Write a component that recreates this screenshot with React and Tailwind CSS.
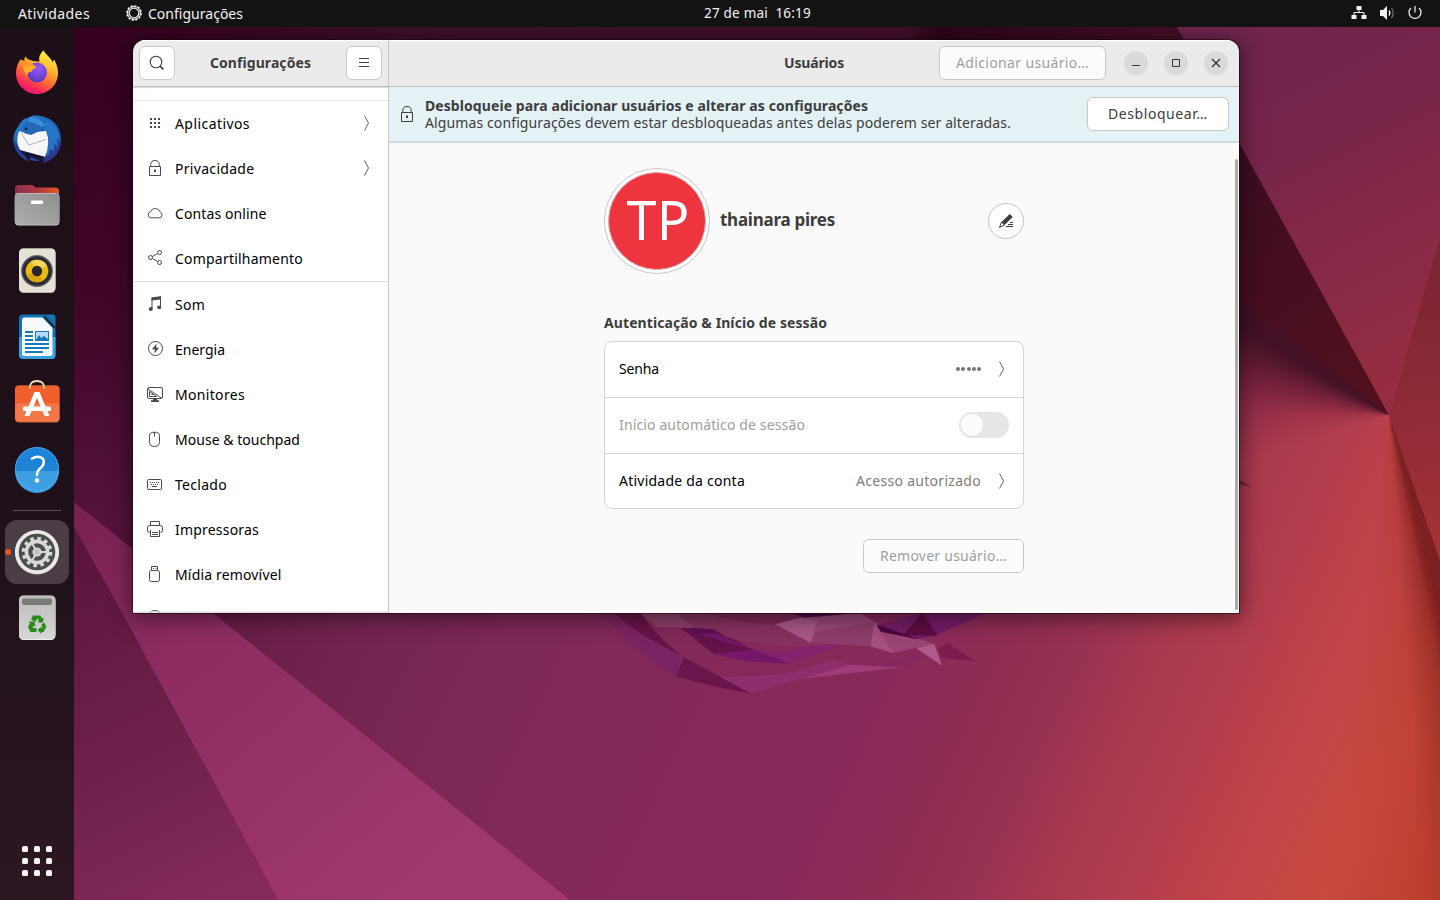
import { useLayoutEffect, useRef } from 'react';

/* Text that is tracked so that it fills exactly `w` pixels. */
function Label({ w, className = '', children }) {
  const ref = useRef(null);
  useLayoutEffect(() => {
    const el = ref.current;
    el.style.letterSpacing = '0px';
    const range = document.createRange();
    range.selectNodeContents(el);
    const natural = range.getBoundingClientRect().width;
    el.style.letterSpacing = `${(w - natural) / children.length}px`;
  }, [w, children]);
  return (
    <span className={`block shrink-0 whitespace-pre ${className}`} style={{ width: w }}>
      <span ref={ref}>{children}</span>
    </span>
  );
}

/* ---------- wallpaper ---------- */
function Wallpaper() {
  return (
    <div className="absolute inset-0 overflow-hidden">
      <div className="absolute inset-x-0 top-[27px] bottom-0 bg-[linear-gradient(115deg,#3c0022_0%,#4b0e33_12%,#5d183f_23%,#72244e_34%,#7e2856_43%,#84295a_56%,#872959_64%,#922d53_71%,#9a3351_75%,#ac3a4e_80%,#b73f4c_84.5%,#c24547_89%,#c9493e_94%,#c44430_100%)]" />
      <svg className="absolute inset-0" width="1440" height="900" viewBox="0 0 1440 900">
        <defs>
          <linearGradient id="purple" gradientUnits="userSpaceOnUse" x1="1200" y1="60" x2="1370" y2="400">
            <stop offset="0" stopColor="#70254d" />
            <stop offset=".35" stopColor="#7a254a" />
            <stop offset="1" stopColor="#962d42" />
          </linearGradient>
          <linearGradient id="top" gradientUnits="userSpaceOnUse" x1="74" y1="0" x2="1180" y2="0">
            <stop offset="0" stopColor="#35001f" />
            <stop offset=".35" stopColor="#40102b" />
            <stop offset=".75" stopColor="#420f2b" />
            <stop offset=".78" stopColor="#2e0519" />
            <stop offset="1" stopColor="#440e26" />
          </linearGradient>
          <linearGradient id="left" gradientUnits="userSpaceOnUse" x1="74" y1="27" x2="133" y2="613">
            <stop offset="0" stopColor="#340020" />
            <stop offset=".45" stopColor="#400627" />
            <stop offset=".8" stopColor="#521139" />
            <stop offset="1" stopColor="#5b183f" />
          </linearGradient>
          <linearGradient id="lower" gradientUnits="userSpaceOnUse" x1="80" y1="560" x2="240" y2="880">
            <stop offset="0" stopColor="#5b163e" />
            <stop offset=".5" stopColor="#6c2049" />
            <stop offset="1" stopColor="#83295b" />
          </linearGradient>
          <linearGradient id="beam" gradientUnits="userSpaceOnUse" x1="60" y1="500" x2="400" y2="900">
            <stop offset="0" stopColor="#762050" />
            <stop offset=".35" stopColor="#8c2c61" />
            <stop offset="1" stopColor="#a0386f" />
          </linearGradient>
          <linearGradient id="shard" gradientUnits="userSpaceOnUse" x1="1239" y1="200" x2="1389" y2="415">
            <stop offset="0" stopColor="#3f0d22" />
            <stop offset="1" stopColor="#54101c" />
          </linearGradient>
          <linearGradient id="facet" gradientUnits="userSpaceOnUse" x1="1410" y1="300" x2="1440" y2="560">
            <stop offset="0" stopColor="#7f2535" />
            <stop offset="1" stopColor="#a53337" />
          </linearGradient>
        </defs>
        <polygon points="74,27 134,27 134,645 74,527" fill="url(#left)" />
        <polygon points="0,440 74,527 278,900 0,900" fill="url(#lower)" />
        <polygon points="74,502 213,613 570,900 278,900 115,600 74,527" fill="url(#beam)" />
        <rect x="74" y="27" width="1110" height="20" fill="url(#top)" />
        <polygon points="1177,27 1440,27 1440,235 1389,415 1239,142" fill="url(#purple)" />
      </svg>
      <div className="absolute inset-0 [clip-path:polygon(1200px_240px,1389px_415px,1440px_620px,1440px_900px,1200px_900px)] bg-[conic-gradient(from_0deg_at_1389px_415px,transparent_0deg,transparent_160deg,rgba(95,15,15,0.8)_165deg,rgba(115,25,20,0.5)_169deg,rgba(150,40,25,0.18)_176deg,transparent_188deg,transparent_252deg,rgba(110,25,60,0.25)_270deg,rgba(85,18,45,0.6)_285deg,rgba(60,15,35,0.92)_300deg,rgba(60,15,35,0.95)_310deg)]" />
      <svg className="absolute inset-0" width="1440" height="900" viewBox="0 0 1440 900">
        <polygon points="1230,126 1389,415 1230,293" fill="url(#shard)" />
        <polygon points="1230,280 1239,297 1389,415 1230,270" fill="url(#shard)" />
        <polygon points="1389,415 1440,235 1440,560" fill="url(#facet)" />
        <polygon points="1389,415 1440,560 1440,620" fill="#7d2023" />
        <polygon points="1239,480 1252,487 1239,484" fill="#6d1f3d" />
        <g transform="translate(560 600) scale(.33333)">
          <path d="M120 40 155 40 362 165 350 230Q230 160 120 40Z" fill="#7b2362" />
          <path d="M150 30 235 30Q280 100 362 165Q240 110 150 30Z" fill="#671448" />
          <path d="M372 172 575 281Q450 260 349 229Z" fill="#6a154c" />
          <path d="M480 231Q640 228 700 215L820 177 872 194Q700 240 575 281Z" fill="#8f2e6c" />
          <path d="M718 238 872 194 1028 202Z" fill="#9d3c77" />
          <path d="M940 197Q1030 180 1080 155L1110 165 1028 202Z" fill="#85285f" />
          <path d="M238 30H640V72Q520 88 440 87L290 80Z" fill="#85325f" />
          <path d="M238 38H345L405 83 290 80Z" fill="#8e4169" />
          <path d="M430 36H690L770 60 645 72Q540 75 430 36Z" fill="#7c2856" />
          <path d="M362 84 466 88 580 150 462 162Z" fill="#65124b" />
          <path d="M388 84 465 88 470 101 410 100Z" fill="#590f55" />
          <path d="M412 101 470 101 580 148 688 190Q560 190 462 162L580 149Z" fill="#74176a" />
          <path d="M575 147Q640 160 690 158L730 132 840 136 688 189Z" fill="#82246f" />
          <path d="M462 88 645 74 750 130 840 136Q620 145 500 112Z" fill="#87315f" />
          <path d="M683 37H870L770 63Z" fill="#520b47" />
          <path d="M720 54 900 40 943 66 750 129Z" fill="#9b4a7b" />
          <path d="M645 73 720 53 772 63 752 129Z" fill="#a85788" />
          <path d="M772 63 900 40 943 66 765 96Z" fill="#9b4878" />
          <path d="M765 96 943 66 932 139 752 129Z" fill="#8e3c6c" />
          <path d="M943 66 1122 132 998 159 932 139Z" fill="#9a4474" />
          <path d="M943 66 998 159 932 139Z" fill="#a54e80" />
          <path d="M952 74 1088 40H1280L1130 106 1070 118 962 94Z" fill="#741c65" />
          <path d="M1088 38 1132 107 1028 105Z" fill="#5c0c42" />
          <path d="M950 74 1028 100 1075 118 962 95Z" fill="#4c0941" />
          <path d="M1068 144 1123 132 1146 197Z" fill="#ae5a8a" />
          <path d="M1134 146 1163 130 1247 184 1146 173Z" fill="#7b1b4e" />
        </g>
      </svg>
    </div>
  );
}

/* ---------- dock icons, drawn on a 64 × 64 grid ---------- */
const Firefox = () => (
  <>
    <defs>
      <linearGradient id="ffBody" x1=".8" y1="0" x2=".3" y2="1">
        <stop offset="0" stopColor="#fff04a" />
        <stop offset=".35" stopColor="#ffb52c" />
        <stop offset=".62" stopColor="#ff6a32" />
        <stop offset=".85" stopColor="#f8275b" />
        <stop offset="1" stopColor="#e0158a" />
      </linearGradient>
      <linearGradient id="ffTail" x1=".5" y1="0" x2=".4" y2="1">
        <stop offset="0" stopColor="#ffef45" />
        <stop offset=".6" stopColor="#ffbd30" />
        <stop offset="1" stopColor="#ff8a2b" stopOpacity="0" />
      </linearGradient>
      <radialGradient id="ffGlobe" cx=".6" cy=".3" r=".8">
        <stop offset="0" stopColor="#9359ff" />
        <stop offset="1" stopColor="#5534b5" />
      </radialGradient>
    </defs>
    <path d="M38.500 9.500C35 13 33.500 16.500 34.500 20.500L28 20 22.500 18 20.500 15.500C19.500 17 19 18.500 19.500 20L15.500 18.500C13 22 11 26.500 11 32 11 44 20.500 53 32 53S53 44 53 32C53 25.500 50.500 21 49 18.500L47.500 21.500C45.500 16 40.500 14 38.500 9.500Z" fill="url(#ffBody)" />
    <path d="M38.500 9.500C34 14 33.500 18 36 21.500 42 25 43.500 32 40 38 44 37 48 31 47.500 21.500 45.500 16 40.500 14 38.500 9.500Z" fill="url(#ffTail)" />
    <circle cx="32" cy="31.500" r="10" fill="url(#ffGlobe)" />
    <path d="M20.500 15.500C18 20 20 21.500 22 22.500 28 22.500 30 24 31.500 26.500 29 27.500 27.500 28 26.500 30.500 24 31.500 21 29 19.500 29.500 17 27 17.500 23 20.500 15.500Z" fill="#ff9524" />
    <path d="M31.500 26.500C29 27.500 27.500 28 26.500 30.500 24 31 22 31.500 22.500 35 20 33 17 27 20 25.500 24 24 29 24 31.500 26.500Z" fill="#ffae2b" />
  </>
);

const Thunderbird = () => (
  <>
    <defs>
      <linearGradient id="tb" x1=".2" y1="0" x2=".8" y2="1">
        <stop offset="0" stopColor="#2b7ecb" />
        <stop offset=".45" stopColor="#1c62b8" />
        <stop offset="1" stopColor="#2f2c86" />
      </linearGradient>
    </defs>
    <path d="M24 10.500 28 8.500C42 8 56 15 56 32.500 56 45 49 54 37 56L40 52 33 54C21 54 9 46 8.500 34 8 25 12 22 14 18 17 13 20 11 24 10.500Z" fill="url(#tb)" />
    <path d="M42 13C52 18 55 26 55 33L51.500 31 53 39 49 37 49 44 45 42 43 49 40 46Q48 33 39 22Z" fill="#2773c4" />
    <path d="M25 10Q34 10 39 17L44 16Q36 20 31 24L21 17Z" fill="#4aa3df" opacity=".6" />
    <path d="M14 24 20 26 41 24Q46 35 40 50L15 43Q10 35 14 24Z" fill="#f6f6f7" />
    <path d="M16 26 24 38 41 32.500" fill="none" stroke="#a8acb0" strokeWidth=".9" />
    <path d="M20 26.500 26 28 39 22 32 17 22 14 17 21Z" fill="#2367b6" />
    <circle cx="21" cy="22" r="1.300" fill="#11233f" />
    <path d="M14 43 40 50 36 54 26 50 24 54Q16 50 14 43Z" fill="#1b1432" />
    <path d="M8.500 33Q9 48 24 55L20 49 16 45 12.500 38Z" fill="#243f99" />
  </>
);

const Files = () => (
  <>
    <defs>
      <linearGradient id="fBack"><stop offset="0" stopColor="#8c2f4d" /><stop offset=".5" stopColor="#ad3a41" /><stop offset="1" stopColor="#e6541f" /></linearGradient>
      <linearGradient id="fFront" x1="1" y1="0" x2="0" y2="1"><stop offset="0" stopColor="#8f8f8f" /><stop offset="1" stopColor="#aeaeae" /></linearGradient>
    </defs>
    <path d="M10 15.500Q10 12 13.500 12H27Q29 12 30 14.500H50.500Q54 14.500 54 18V30H10Z" fill="url(#fBack)" />
    <rect x="9.800" y="20" width="44.600" height="32.500" rx="4" fill="#d0d0d0" />
    <rect x="9.800" y="20" width="44.600" height="31.700" rx="4" fill="url(#fFront)" />
    <path d="M13 20.500H51" stroke="#b9b9b9" />
    <rect x="26" y="27.500" width="12" height="3.500" rx="1" fill="#fff" />
  </>
);

const Rhythmbox = () => (
  <>
    <rect x="14" y="9.500" width="36.500" height="44.500" rx="4.500" fill="#b9b5aa" />
    <rect x="14" y="9.500" width="36.500" height="43.500" rx="4.500" fill="#e5e1d7" />
    <circle cx="32" cy="32" r="16" fill="#6b6d72" />
    <circle cx="32" cy="32" r="14.800" fill="#2c2d35" />
    <circle cx="32" cy="32" r="11.300" fill="#ecbb12" />
    <path d="M32 32 26 22.500A11.300 11.300 0 0 1 42 27Z" fill="#f5d657" />
    <path d="M32 32 38 41.500A11.300 11.300 0 0 1 21.500 36Z" fill="#d9a70d" />
    <circle cx="32" cy="32" r="5.200" fill="#26272b" />
  </>
);

const Writer = () => (
  <>
    <path d="M18 9.500H41L50.500 20V50Q50.500 54 46.500 54H18Q14 54 14 50V13.500Q14 9.500 18 9.500Z" fill="#0e73b5" />
    <path d="M14 32H50.500V50Q50.500 54 46.500 54H18Q14 54 14 50Z" fill="#3ba1dc" />
    <path d="M19.500 12.500H37.500L47.500 23V48.500Q47.500 51 45 51H19.500Q17 51 17 48.500V15Q17 12.500 19.500 12.500Z" fill="#f8f9fa" />
    <path d="M41 9.500H47.500Q50.500 9.500 50.500 12.500V20Z" fill="#1479bc" />
    <path d="M39 11.500 50 23" stroke="#112a3b" strokeWidth="2" />
    <path d="M20 27H28M20 31H28M20 35H28M20 39H44M20 43H44M20 47H38" stroke="#1679b9" strokeWidth="1.800" />
    <rect x="30.500" y="26.500" width="13" height="9" fill="#b5dcf4" stroke="#1679b9" />
    <path d="M31 35 34 30 36 33 39 31 43 34V36H31Z" fill="#1679b9" />
  </>
);

const Software = () => (
  <>
    <rect x="10" y="14.500" width="44.500" height="37" rx="4" fill="#cb5a31" />
    <path d="M14 14.500H50.500Q54.500 14.500 54.500 18.500V33H10V18.500Q10 14.500 14 14.500Z" fill="#f0602c" />
    <path d="M10 32.500H54.500V46.700Q54.500 50.700 50.500 50.700H14Q10 50.700 10 46.700Z" fill="#f27849" />
    <path d="M25 17.500Q24.500 10 32 10T39 17.500" fill="none" stroke="#f5ddb0" strokeWidth="1.800" />
    <path d="M29.500 21H34.500L44.500 45H39.500L32 27 24.500 45H19.500Z" fill="#fff" />
    <rect x="18" y="35.500" width="28" height="4.500" rx="1.500" fill="#fff" />
  </>
);

const Help = () => (
  <>
    <circle cx="32" cy="32" r="22" fill="#1d83d7" />
    <path d="M10 34A22 22 0 0 0 54 34Z" fill="#3c9fe2" />
    <circle cx="32" cy="32" r="21.500" fill="none" stroke="#55aae6" strokeWidth=".8" />
    <path d="M27 21.500Q30 19.700 33 19.800 39 20.300 38.800 25 38.700 28.500 35.500 31 32.200 33.500 32 38" fill="none" stroke="#fff" strokeWidth="2.500" strokeLinecap="round" />
    <circle cx="32" cy="43.500" r="2.300" fill="#fff" />
  </>
);

const Gear = () => (
  <>
    <circle cx="32" cy="32.500" r="22" fill="#b9b9b5" />
    <circle cx="32" cy="32" r="22" fill="#e9e9e6" />
    <circle cx="32" cy="32" r="18.300" fill="#4b4f4c" />
    <circle cx="32" cy="32" r="13.500" fill="none" stroke="#d8d8d5" strokeWidth="3.600" strokeDasharray="3.500 3.568" />
    <circle cx="32" cy="32" r="10.600" fill="none" stroke="#d8d8d5" strokeWidth="3.600" />
    <circle cx="32" cy="32" r="4.600" fill="#d8d8d5" />
    <path d="M32 32H42M32 32 27 23.300M32 32 27 40.700" stroke="#d8d8d5" strokeWidth="2" />
    <circle cx="32" cy="32" r="3" fill="#c4c4c1" />
  </>
);

const Trash = () => (
  <>
    <defs>
      <linearGradient id="bin" x2="0" y2="1"><stop offset="0" stopColor="#bdbdbd" /><stop offset="1" stopColor="#d6d6d6" /></linearGradient>
    </defs>
    <rect x="14" y="9.500" width="36.500" height="44.500" rx="4.500" fill="#eeeeee" />
    <rect x="14" y="10" width="36.500" height="43" rx="4.500" fill="url(#bin)" />
    <rect x="17" y="12.500" width="30" height="6.500" rx="2" fill="#7b7b79" />
    <g fill="#2a8a1e">
      <path d="M28 29.500H35.500L37 32.500 39 31.500 37.500 37 32 36 34 35 32.500 32.500 30 36 26 33.500Z" />
      <path d="M23.500 35.500 29.500 35.500 30.500 40.500 28.500 39.700 27.500 42H31.500V46H25.500L23 41 25 37Z" />
      <path d="M36.500 38.500 39.500 36.500 41.200 41 38.500 46H36.500V48L32.500 44 36.500 40.500V42.500H37.500Z" />
    </g>
  </>
);

const dockApps = [Firefox, Thunderbird, Files, Rhythmbox, Writer, Software, Help];

function DockItem({ icon: Icon, active }) {
  return (
    <div className="flex h-[66px] w-[74px] shrink-0 items-center justify-center">
      <div className={`relative size-16 rounded-xl ${active ? 'bg-[#4a3d45]' : ''}`}>
        <svg width="64" height="64" viewBox="0 0 64 64"><Icon /></svg>
        {active && <span className="absolute top-[29px] left-0 size-1.5 rounded-full bg-[#e95420]" />}
      </div>
    </div>
  );
}

function Dock() {
  return (
    <nav className="relative flex w-[74px] shrink-0 flex-col items-center bg-[linear-gradient(180deg,#1d0f18_0%,#1e1119_55%,#24141d_75%,#2b1722_100%)] pt-[13px]">
      {dockApps.map((Icon, i) => <DockItem key={i} icon={Icon} />)}
      <div className="mt-2 mb-2 h-px w-12 bg-[#5b5056]" />
      <DockItem icon={Gear} active />
      <DockItem icon={Trash} />
      <div className="mt-auto mb-6 grid grid-cols-3 gap-1.5">
        {Array.from({ length: 9 }, (_, i) => <span key={i} className="size-1.5 rounded-[1.5px] bg-[#f4f2f3]" />)}
      </div>
    </nav>
  );
}

/* ---------- symbolic icons, drawn on a 16 × 16 grid ---------- */
const shapes = {
  apps: <path d="M3 4H5M7 4H9M11 4H13M3 8H5M7 8H9M11 8H13M3 12H5M7 12H9M11 12H13" strokeWidth="2" />,
  lock: <><path d="M2.500 6.500H13.500V15.500H2.500Z" /><path d="M3.800 6V4.500A4.200 4 0 0 1 12.200 4.500V6" /><path d="M8 9.500V12" strokeWidth="2" /></>,
  cloud: <path d="M3.800 12.800H12.500A3 3 0 0 0 13.200 7.100 5 5 0 0 0 3.700 6.700 3.100 3.100 0 0 0 3.800 12.800Z" />,
  share: <><circle cx="3.500" cy="7.500" r="2" /><circle cx="12.500" cy="2.500" r="2" /><circle cx="12.500" cy="12.500" r="2" /><path d="M5.500 6.500 10.500 3.500M5.500 8.500 10.500 11.500" /></>,
  music: <><path d="M5 13V2L13.500 1V11" /><path d="M4.500 1.500 14 .2V3.500L4.500 4.500Z" fill="currentColor" stroke="none" /><ellipse cx="3.800" cy="13" rx="2" ry="1.900" fill="currentColor" stroke="none" /><ellipse cx="12.200" cy="11.300" rx="2" ry="1.900" fill="currentColor" stroke="none" /></>,
  power: <><circle cx="8.500" cy="7.500" r="7" /><path d="M9.500 2.500 5 8.300H7.800L7.500 12.500 12 6.800H9.200Z" fill="currentColor" stroke="none" /></>,
  display: <><path d="M2 1.500H14Q15.500 1.500 15.500 3V11Q15.500 12.500 14 12.500H2Q.5 12.500 .5 11V3Q.5 1.500 2 1.500ZM1 3 14.500 12M2.500 5.500V10.500H9.500ZM4.500 8.500H6" /><path d="M6 13H10V14.300H12V16H4V14.300H6Z" fill="currentColor" stroke="none" /></>,
  mouse: <path d="M7.500 1.200Q12.500 1.200 12.500 4.500V10.500Q12.500 15.500 7.500 15.500T2.500 10.500V4.500Q2.500 1.200 7.500 1.200ZM7.500 1V5.500" />,
  keyboard: <><path d="M1.800 3.500H13.200Q14.500 3.500 14.500 4.800V12.200Q14.500 13.500 13.200 13.500H1.800Q.5 13.500 .5 12.200V4.800Q.5 3.500 1.800 3.500Z" /><path d="M3 6.500H12.500M4 8.500H12" strokeDasharray="1 1" /><path d="M5 10.500H10" /></>,
  printer: <><path d="M3.500 4V.5H12.500V4M2.500 11.500Q.5 11.500 .5 9.500V6.500Q.5 4.500 2.500 4.500H13.500Q15.500 4.500 15.500 6.500V9.500Q15.500 11.500 13.500 11.500M3.500 9V15.500H12.500V9M5 11.500H11M5 13.500H11" /><path d="M3 9.500H4M12 9.500H13" /></>,
  usb: <path d="M4.500 4.500H10.500Q12.500 4.500 12.500 6.500V13.500Q12.500 15.500 10.500 15.500H4.500Q2.500 15.500 2.500 13.500V6.500Q2.500 4.500 4.500 4.500ZM4.500 4V.5H10.500V4M6 2.500H7M8.500 2.500H9.500" />,
  dial: <circle cx="8" cy="7.500" r="7" />,
};
function Sym({ name, className = '' }) {
  return (
    <svg width="16" height="16" viewBox="0 0 16 16" fill="none" stroke="currentColor" className={`shrink-0 ${className}`}>
      {shapes[name]}
    </svg>
  );
}
function Chevron() {
  return (
    <svg width="8" height="16" viewBox="0 0 8 16" fill="none" stroke="#666" className="shrink-0">
      <path d="M1.500 .5 5.500 8 1.500 15.500" />
    </svg>
  );
}

const primary = [
  ['apps', 'Aplicativos', 75, true],
  ['lock', 'Privacidade', 79.5, true],
  ['cloud', 'Contas online', 91.5],
  ['share', 'Compartilhamento', 128],
];
const hardware = [
  ['music', 'Som', 30],
  ['power', 'Energia', 50],
  ['display', 'Monitores', 70],
  ['mouse', 'Mouse & touchpad', 125],
  ['keyboard', 'Teclado', 52],
  ['printer', 'Impressoras', 84],
  ['usb', 'Mídia removível', 106.5],
];

function SideRow({ icon, text, w, arrow }) {
  return (
    <li className="flex h-[45px] items-center pr-[17px] pl-[14px]">
      <Sym name={icon} className="mb-px text-[#4a4a4a]" />
      <Label w={w} className="ml-3 text-black">{text}</Label>
      {arrow && <span className="mb-[2px] ml-auto"><Chevron /></span>}
    </li>
  );
}

function Sidebar() {
  return (
    <aside className="relative w-64 shrink-0 overflow-hidden border-r border-[#c6c6c6] bg-white shadow-[inset_0_2px_1px_-1px_#d5d5d5]">
      <div className="h-[13px]" />
      <ul className="border-t border-[#e4e4e4]">
        {primary.map(([icon, text, w, arrow]) => <SideRow key={text} icon={icon} text={text} w={w} arrow={arrow} />)}
      </ul>
      <ul className="border-t border-[#e0e0e0]">
        {hardware.map(([icon, text, w]) => <SideRow key={text} icon={icon} text={text} w={w} />)}
      </ul>
      <div className="pt-[13px] pl-[14px]"><Sym name="dial" className="text-[#4a4a4a]" /></div>
      <div className="absolute inset-x-0 bottom-0 h-0.5 bg-linear-to-b from-[#ececec]/40 to-[#cfcfcf]/80" />
    </aside>
  );
}

function WindowControl({ children }) {
  return (
    <button className="flex size-6 items-center justify-center rounded-full bg-[#dadada]">
      <svg width="16" height="16" viewBox="0 0 16 16" fill="none" stroke="#333">{children}</svg>
    </button>
  );
}

function HeaderBar() {
  return (
    <header className="flex h-[47px] shrink-0 border-b border-[#bfbfbf] bg-[#ebebeb] shadow-[inset_0_1px_0_#fff]">
      <div className="flex w-64 items-center justify-between border-r border-[#c6c6c6] px-1.5">
        <button className="flex h-[34px] w-9 items-center justify-center rounded-md border border-[#c8c8c8] bg-white text-[#3d3d3d]">
          <svg width="16" height="16" viewBox="0 0 16 16" fill="none" stroke="currentColor" strokeWidth="1.100"><circle cx="7" cy="7" r="5.800" /><path d="M11 11 14.300 14.300" strokeWidth="1.700" /></svg>
        </button>
        <Label w={101} className="mb-0.5 font-bold text-[#3d3d3d]">Configurações</Label>
        <button className="flex h-[34px] w-9 items-center justify-center rounded-md border border-[#c8c8c8] bg-white">
          <svg width="16" height="16" viewBox="0 0 16 16" stroke="#3d3d3d"><path d="M3 3.500H13M3 7.500H13M3 11.500H13" /></svg>
        </button>
      </div>
      <div className="flex flex-1 items-center pr-[11px]">
        <Label w={60} className="mb-0.5 ml-[395px] font-bold text-[#3d3d3d]">Usuários</Label>
        <button className="ml-auto flex h-[34px] w-[167px] items-center justify-center rounded-md border border-[#c8c8c8] bg-[#fcfcfc] pb-0.5 text-[#a0a0a0]">
          <Label w={133}>Adicionar usuário…</Label>
        </button>
        <div className="ml-[18px] flex gap-4">
          <WindowControl><path d="M4 10.500H12" /></WindowControl>
          <WindowControl><path d="M4.500 4.500H11.500V11.500H4.500Z" /></WindowControl>
          <WindowControl><path d="M4 4 12 12M12 4 4 12" strokeWidth="1.300" /></WindowControl>
        </div>
      </div>
    </header>
  );
}

function LockBanner() {
  return (
    <div className="flex h-[56px] items-center border-b-2 border-[#d3d9db] bg-[#e4f1f5] px-2.5">
      <Sym name="lock" className="text-[#3d3d3d]" />
      <div className="ml-2.5 leading-[17px] text-[#3d3d3d]">
        <Label w={443} className="font-bold">Desbloqueie para adicionar usuários e alterar as configurações</Label>
        <Label w={586}>Algumas configurações devem estar desbloqueadas antes delas poderem ser alteradas.</Label>
      </div>
      <button className="ml-auto flex h-[34px] w-[142px] items-center justify-center rounded-md border border-[#c8c8c8] bg-white pb-0.5 text-[#3d3d3d]">
        <Label w={100}>Desbloquear…</Label>
      </button>
    </div>
  );
}

function UserPanel() {
  return (
    <main className="relative flex-1 bg-[#fafafa]">
      <LockBanner />
      <div className="mx-auto w-[420px] pt-[25px]">
        <div className="flex items-center">
          <div className="flex size-[106px] items-center justify-center rounded-full border border-[#c6c6c6] bg-white">
            <div className="flex size-[98px] items-center justify-center rounded-full border border-[#d4b0b2] bg-[#ee343e] pl-0.5">
              <Label w={63} className="mb-1 text-[54px] leading-[92px] text-white">TP</Label>
            </div>
          </div>
          <Label w={115} className="mb-0.5 ml-2.5 text-[17px] font-bold text-[#3d3d3d]">thainara pires</Label>
          <button className="ml-auto flex size-9 items-center justify-center rounded-full border border-[#c3c3c3] bg-white">
            <svg width="16" height="16" viewBox="0 0 16 16" fill="#3d3d3d">
              <path d="M11.800 1 14.800 4 6.500 12 3.500 9Z" />
              <path d="M3.500 9 6.500 12 1.500 14.500Z" fill="none" stroke="#3d3d3d" />
              <path d="M12 9.500H15M10 11.500H15M8 13.500H15" stroke="#3d3d3d" />
            </svg>
          </button>
        </div>
        <Label w={223} className="mt-[39px] leading-[20px] font-bold text-[#3d3d3d]">Autenticação &amp; Início de sessão</Label>
        <div className="mt-2 overflow-hidden rounded-lg border border-[#d5d5d5] bg-white">
          <div className="flex h-[56px] items-center border-b border-[#d5d5d5] px-[14px] pb-0.5">
            <Label w={40} className="text-black">Senha</Label>
            <span className="ml-auto flex gap-[1.200px]">
              {Array.from({ length: 5 }, (_, i) => <span key={i} className="size-1 rounded-full bg-[#767676]" />)}
            </span>
            <span className="mr-[3px] ml-[17px]"><Chevron /></span>
          </div>
          <div className="flex h-[56px] items-center justify-between border-b border-[#d5d5d5] px-[14px] pb-0.5">
            <Label w={186} className="text-[#a0a0a0]">Início automático de sessão</Label>
            <span className="flex h-[26px] w-[50px] items-center rounded-full bg-[#e6e6e6] px-0.5">
              <span className="size-[22px] rounded-full bg-[#fbfbfb]" />
            </span>
          </div>
          <div className="flex h-[54px] items-center px-[14px]">
            <Label w={126} className="mb-0.5 text-black">Atividade da conta</Label>
            <Label w={125} className="mb-0.5 ml-auto text-[#7d7d7d]">Acesso autorizado</Label>
            <span className="mr-[3px] ml-[17px]"><Chevron /></span>
          </div>
        </div>
        <button className="mt-[30px] ml-auto flex h-[34px] w-[161px] items-center justify-center rounded-md border border-[#c8c8c8] bg-[#fcfcfc] pb-0.5 text-[#a0a0a0]">
          <Label w={127}>Remover usuário…</Label>
        </button>
      </div>
      <div className="absolute top-[72px] right-px h-[451px] w-[3px] rounded-full bg-[#acacac]" />
    </main>
  );
}

function TopBar() {
  return (
    <div className="relative grid h-[27px] grid-cols-3 items-center bg-[#131313] text-[#f2f2f2]">
      <div className="flex items-center pl-[18px]">
        <Label w={72}>Atividades</Label>
        <svg className="mb-px ml-9" width="16" height="16" viewBox="0 0 16 16" fill="none" stroke="#f2f2f2">
          <circle cx="8" cy="8" r="7" strokeWidth="1.700" strokeDasharray="2.200 1.465" />
          <circle cx="8" cy="8" r="6.400" strokeWidth="1" />
          <circle cx="8" cy="8" r="4.800" strokeWidth="1.200" />
        </svg>
        <Label w={95} className="ml-1.5">Configurações</Label>
      </div>
      <div className="ml-[224px]"><Label w={107} className="text-[13.500px] leading-[27px]">{'27 de mai  16:19'}</Label></div>
      <div className="flex items-center justify-end gap-3 pr-[17px] pb-px">
        <svg width="16" height="16" viewBox="0 0 16 16" fill="#f2f2f2"><path d="M5.500 1H10.500V5H5.500ZM.5 10H5.500V14H.5ZM10.500 10H15.500V14H10.500Z" /><path d="M8 5V7.500M3 10V7.500H13V10" fill="none" stroke="#f2f2f2" /></svg>
        <svg width="16" height="16" viewBox="0 0 16 16" fill="#f2f2f2"><path d="M1 5H4L8 1V15L4 11H1Z" /><path d="M10 5.500Q11.800 8 10 10.500" fill="none" stroke="#f2f2f2" strokeWidth="1.300" /><path d="M12.500 3Q16 8 12.500 13" fill="none" stroke="#777" strokeWidth="1.200" /></svg>
        <svg width="16" height="16" viewBox="0 0 16 16" fill="none" stroke="#f2f2f2" strokeWidth="1.200"><path d="M12 3A6 6 0 1 1 4 3M8 1V7.500" /></svg>
      </div>
    </div>
  );
}

export default function App() {
  return (
    <div className="relative h-[900px] w-[1440px] overflow-hidden font-['Noto_Sans',sans-serif] text-[14px]">
      <Wallpaper />
      <div className="relative flex h-full flex-col">
        <TopBar />
        <div className="flex flex-1">
          <Dock />
          <div className="pt-[13px] pl-[59px]">
            <section className="flex h-[573px] w-[1106px] flex-col overflow-hidden rounded-t-xl shadow-[0_0_0_1px_rgba(20,5,15,0.55),0_3px_22px_2px_rgba(0,0,0,0.5)]">
              <HeaderBar />
              <div className="flex min-h-0 flex-1">
                <Sidebar />
                <UserPanel />
              </div>
            </section>
          </div>
        </div>
      </div>
    </div>
  );
}
